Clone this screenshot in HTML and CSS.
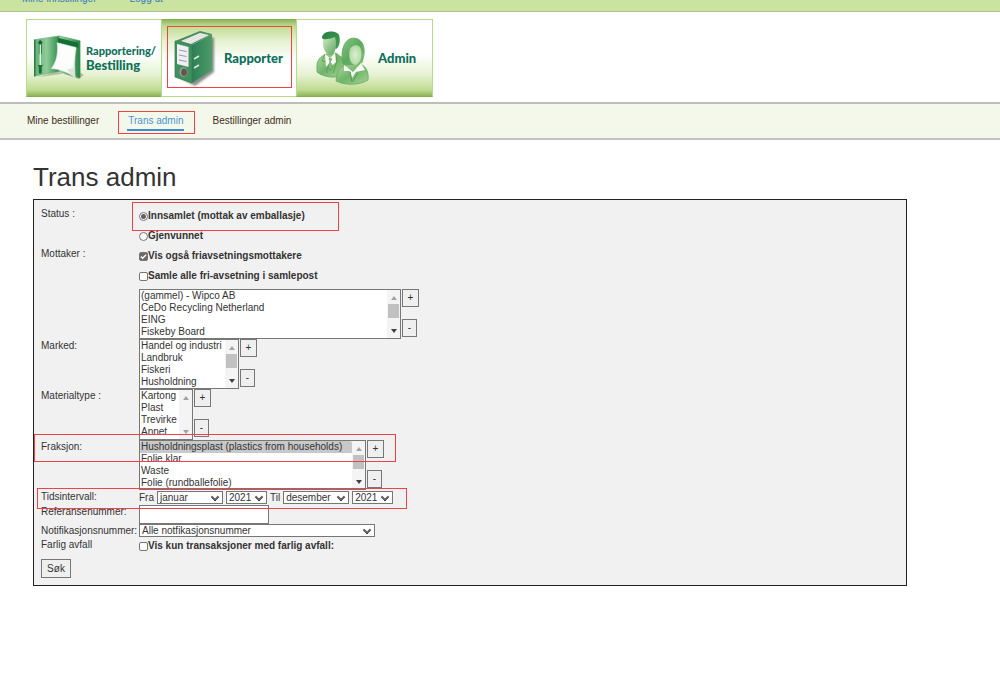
FILE: index.html
```html
<!DOCTYPE html>
<html lang="no">
<head>
<meta charset="utf-8">
<title>Trans admin</title>
<link rel="stylesheet" href="styles.css">
</head>
<body>
<div class="topbar"><a href="#">Mine innstillinger</a><a href="#">Logg ut</a></div>

<header class="header">
  <nav class="tabs">
    <a class="tab" href="#">
      <svg class="tab-icon" width="50" height="48" viewBox="0 0 52 50">
        <defs>
          <linearGradient id="cover" x1="0" x2="1"><stop offset="0" stop-color="#5fae72"/><stop offset=".5" stop-color="#8fcb98"/><stop offset="1" stop-color="#2f8c4b"/></linearGradient>
          <linearGradient id="coverR" x1="0" x2="1"><stop offset="0" stop-color="#a5d8a6"/><stop offset="1" stop-color="#278247"/></linearGradient>
          <linearGradient id="sheet" x1="0" y1="0" x2="1" y2="1"><stop offset="0" stop-color="#fff"/><stop offset=".7" stop-color="#fbfdfa"/><stop offset="1" stop-color="#cfdccf"/></linearGradient>
        </defs>
        <path d="M4 45 L24 39 L46 47 L52 43 L47 39Z" fill="#718071" opacity=".45"/>
        <path d="M0 6 L26 2 V39 L0 44Z" fill="url(#cover)" stroke="#6aa874" stroke-width=".6"/>
        <path d="M0 6 H1.500 V44 L0 44Z" fill="#287a42"/>
        <path d="M26 2 L48 7 V46 L26 39Z" fill="url(#coverR)" stroke="#4f9d60" stroke-width=".6"/>
        <path d="M25 4 L46 9 V15 L25 9Z" fill="#127036"/>
        <path d="M24 9 L44 14 C42 25 42 34 43 46 C36 40 28 37 18 36 C24 28 25 19 24 9Z" fill="url(#sheet)" stroke="#d7e7d6" stroke-width=".5"/>
        <path d="M34 37 L43 46 L42 36Z" fill="#dce5da"/>
        <path d="M6.500 8 V20 M6.500 34 V40" stroke="#176b3a" stroke-width="3" stroke-linecap="round"/>
        <path d="M6.500 11 V33" stroke="#d9efdb" stroke-width="1.500"/>
        <path d="M4 9 H9 M4 33 H9" stroke="#0c5530" stroke-width="1"/>
      </svg>
      <span class="tab-text tab-text-small">Rapportering/<br><span class="tab-text-large">Bestilling</span></span>
    </a>
    <a class="tab tab-active" href="#">
      <svg class="tab-icon binder" width="44" height="58" viewBox="0 0 44 58">
        <defs>
          <linearGradient id="side" x1="0" x2="1"><stop offset="0" stop-color="#2d7f56"/><stop offset="1" stop-color="#4d9b68"/></linearGradient>
          <filter id="soft" x="-20%" y="-20%" width="140%" height="140%"><feGaussianBlur stdDeviation="1.300"/></filter>
        </defs>
        <path d="M5 48 L22 57 L41 43 V9 L38 8Z" fill="#576158" opacity=".7" filter="url(#soft)"/>
        <path d="M2 12 L27 2 L39 5 L19 16Z" fill="#4d8c5d"/>
        <path d="M8 12 L27 4 L36 6 L18 15Z" fill="#f1f1ee"/>
        <path d="M11 12 L29 5 M14 13 L32 5.500 M17 14 L35 6" stroke="#c9d0c8" stroke-width=".6"/>
        <path d="M19 16 L39 5 V41 L19 54Z" fill="url(#side)"/>
        <path d="M2 12 L19 16 V54 L2 48Z" fill="#3f925f" stroke="#34764e" stroke-width=".7"/>
        <path d="M4 15 L15.500 18 V38 L4 35Z" fill="#f1edf5"/>
        <path d="M6 21 L13.500 22.500 M6 26 L13.500 27.500 M6 31 L13.500 32.500" stroke="#9b97a2" stroke-width="1"/>
        <ellipse cx="10.500" cy="43" rx="4" ry="4.800" fill="#9aa292"/>
        <ellipse cx="11" cy="43.300" rx="2.900" ry="3.700" fill="#66554e"/>
        <path d="M21 30 L26 27 M21 39 L26 36" stroke="#d6eadb" stroke-width="1.500"/>
      </svg>
      <span class="tab-text">Rapporter</span>
      <span class="mark mark-tab"></span>
    </a>
    <a class="tab" href="#">
      <svg class="tab-icon people" width="54" height="54" viewBox="0 0 54 54">
        <defs>
          <linearGradient id="suit" x1="0" y1="0" x2="1" y2="1"><stop offset="0" stop-color="#b0dba0"/><stop offset=".5" stop-color="#70b46b"/><stop offset="1" stop-color="#a4d393"/></linearGradient>
          <linearGradient id="hair" x1="0" y1="0" x2="1" y2="1"><stop offset="0" stop-color="#237f43"/><stop offset="1" stop-color="#4a9f58"/></linearGradient>
          <linearGradient id="hair2" x1="0" y1="0" x2="1" y2="1"><stop offset="0" stop-color="#8cc583"/><stop offset=".5" stop-color="#5aaa5f"/><stop offset="1" stop-color="#86c07c"/></linearGradient>
          <linearGradient id="face" x1="0" y1="0" x2="1" y2="1"><stop offset="0" stop-color="#d3ebc3"/><stop offset="1" stop-color="#57a35d"/></linearGradient>
          <radialGradient id="face2"><stop offset="0" stop-color="#dcefd0"/><stop offset="1" stop-color="#b4daa6"/></radialGradient>
        </defs>
        <path d="M1 39 C0 29 4 26 10 23 L20 22 L29 29 V44 C18 48 7 46 1 41Z" fill="url(#suit)" stroke="#67aa62" stroke-width=".8"/>
        <path d="M9 23 L6 30 L11 31 L11 42 M20 23 L21 30 L17 42" fill="none" stroke="#549956" stroke-width=".8"/>
        <path d="M9 23 L14 27 L19 22 L20 31 L16 35 L13 33 L10 36Z" fill="#f7fbef"/>
        <path d="M13 27 L16 28 L14 31 L17 35 L14 40 L12 35 L14 31Z" fill="#82ba78" stroke="#579859" stroke-width=".6"/>
        <path d="M6 7 C6 -1 21 -1 23 4 C25 10 23 17 20 18 L8 9Z" fill="url(#hair)"/>
        <path d="M7 8 C11 9 16 7 19 6 C22 17 18 24 14 24 C9 23 6 16 7 8Z" fill="url(#face)"/>
        <path d="M27 33 C24 20 28 7 38 7 C48 8 50 19 47 28 C46 34 43 34 38 35Z" fill="url(#hair2)" stroke="#5aa65d" stroke-width=".7"/>
        <path d="M20 50 C21 38 25 36 30 34 L44 33 C50 35 53 41 52 49 C42 55 28 54 20 50Z" fill="url(#suit)" stroke="#67aa62" stroke-width=".8"/>
        <path d="M28 34 L37 41 L45 32 L49 39 L40 41 L36 47 L34 40 L28 40Z" fill="#f7fbef"/>
        <path d="M34 41 L36 51 L42 42" fill="none" stroke="#559b59" stroke-width="1"/>
        <path d="M34 18 C37 13 44 13 45 19 C47 27 43 34 39 34 C34 33 32 25 34 18Z" fill="url(#face2)"/>
      </svg>
      <span class="tab-text">Admin</span>
    </a>
  </nav>
</header>

<nav class="subnav">
  <a href="#">Mine bestillinger</a>
  <a class="current" href="#">Trans admin<span class="mark mark-link"></span></a>
  <a href="#">Bestillinger admin</a>
</nav>

<main class="main">
  <h1>Trans admin</h1>
  <form class="panel">
    <div class="row">
      <span class="label">Status :</span>
      <div class="choices">
        <label class="choice"><input type="radio" name="status" checked>Innsamlet (mottak av emballasje)</label>
        <label class="choice"><input type="radio" name="status">Gjenvunnet</label>
      </div>
      <span class="mark mark-status"></span>
    </div>
    <div class="row">
      <label class="label" for="mottaker">Mottaker :</label>
      <div class="choices">
        <label class="choice"><input type="checkbox" checked>Vis også friavsetningsmottakere</label>
        <label class="choice"><input type="checkbox">Samle alle fri-avsetning i samlepost</label>
        <div class="picker">
          <div class="list list-xl">
            <select id="mottaker" multiple size="4"><option>(gammel) - Wipco AB</option><option>CeDo Recycling Netherland</option><option>EING</option><option>Fiskeby Board</option></select>
            <span class="scroll"><i class="up"></i><i class="thumb"></i><i class="down"></i></span>
          </div>
          <div class="buttons"><button type="button">+</button><button type="button" class="minus">-</button></div>
        </div>
      </div>
    </div>
    <div class="row">
      <label class="label label-tight" for="marked">Marked:</label>
      <div class="picker">
        <div class="list list-m">
          <select id="marked" multiple size="4"><option>Handel og industri</option><option>Landbruk</option><option>Fiskeri</option><option>Husholdning</option></select>
          <span class="scroll"><i class="up"></i><i class="thumb"></i><i class="down"></i></span>
        </div>
        <div class="buttons"><button type="button">+</button><button type="button" class="minus">-</button></div>
      </div>
    </div>
    <div class="row">
      <label class="label label-tight" for="material">Materialtype :</label>
      <div class="picker">
        <div class="list list-s">
          <select id="material" multiple size="4"><option>Kartong</option><option>Plast</option><option>Trevirke</option><option>Annet</option></select>
          <span class="scroll scroll-off"><i class="up"></i><i class="down"></i></span>
        </div>
        <div class="buttons"><button type="button">+</button><button type="button" class="minus">-</button></div>
      </div>
    </div>
    <div class="row">
      <label class="label label-tight" for="fraksjon">Fraksjon:</label>
      <div class="picker">
        <div class="list list-l">
          <select id="fraksjon" multiple size="4"><option class="chosen">Husholdningsplast (plastics from households)</option><option>Folie klar</option><option>Waste</option><option>Folie (rundballefolie)</option></select>
          <span class="scroll"><i class="up"></i><i class="thumb"></i><i class="down"></i></span>
        </div>
        <div class="buttons"><button type="button">+</button><button type="button" class="minus">-</button></div>
      </div>
      <span class="mark mark-fraction"></span>
    </div>
    <div class="row">
      <span class="label label-tight">Tidsintervall:</span>
      <div class="dates">
        <label for="fra">Fra</label>
        <span class="drop drop-month"><select id="fra"><option>januar</option></select></span>
        <span class="drop drop-year"><select aria-label="Fra år"><option>2021</option></select></span>
        <label for="til">Til</label>
        <span class="drop drop-month"><select id="til"><option>desember</option></select></span>
        <span class="drop drop-year"><select aria-label="Til år"><option>2021</option></select></span>
      </div>
      <span class="mark mark-dates"></span>
    </div>
    <div class="row">
      <label class="label label-tight" for="ref">Referansenummer:</label>
      <input class="text" id="ref" type="text">
    </div>
    <div class="row">
      <label class="label label-tight" for="notif">Notifikasjonsnummer:</label>
      <span class="drop drop-wide"><select id="notif"><option>Alle notfikasjonsnummer</option></select></span>
    </div>
    <div class="row">
      <label class="label label-tight" for="farlig">Farlig avfall</label>
      <label class="choice choice-last"><input id="farlig" type="checkbox">Vis kun transaksjoner med farlig avfall:</label>
    </div>
    <button type="submit" class="submit">Søk</button>
  </form>
</main>
</body>
</html>
```
FILE: styles.css
```css
* { box-sizing: border-box; }
body {
  margin: 0;
  background: #fff;
  color: #333;
  font: 10px/14px "Liberation Sans", Arial, sans-serif;
}
a { color: inherit; text-decoration: none; }
input, select, button { font: inherit; color: inherit; margin: 0; }

.topbar {
  display: flex;
  align-items: flex-end;
  gap: 33px;
  height: 12px;
  padding: 0 22px 6px;
  overflow: hidden;
  background: #cae3a0;
  border-bottom: 1px solid #abc58a;
  color: #337ab7;
  line-height: 12px;
}

.header {
  padding: 7px 26px 5px;
  border-bottom: 2px solid #bdbdbd;
}
.tabs { display: flex; }
.tab {
  position: relative;
  display: flex;
  align-items: center;
  width: 135px;
  height: 78px;
  padding-left: 7px;
  border: 1px solid #b9da86;
  border-bottom-color: #86ac50;
  border-right: 0;
  background: linear-gradient(#fff 0, #fff 45%, #e6f2d2 72%, #bfdc91 92%, #8fb659 100%);
  color: #0c6f5a;
  font: 900 13px/14px "Trebuchet MS", Lato, "Open Sans", sans-serif;
}
.tab:last-child { width: 137px; border-right: 1px solid #b9da86; }
.tab-active {
  border-color: #86ac50 #b9da86 #b9da86;
  background: linear-gradient(#8fb659 0, #bfdc91 8%, #e6f2d2 28%, #fff 55%, #fff 100%);
}
.tab-icon { flex: none; }
.tab-text { margin-left: 2px; white-space: nowrap; }
.tab-text-small { font-size: 11px; }
.tab-text-large { font-size: 13px; }
.binder { margin-left: 4px; margin-right: 5px; }
.people { margin-left: 12px; margin-right: 6px; }

.subnav {
  display: flex;
  gap: 28px;
  padding: 10px 27px 7px;
  background: #f4f8ea;
  border-bottom: 2px solid #c2c4bf;
  color: #3d2e20;
}
.subnav a { padding-bottom: 3px; }
.subnav .current {
  position: relative;
  padding: 0 1px 1px;
  border-bottom: 2px solid #3c8fd2;
  color: #4896d0;
}

.mark {
  position: absolute;
  border: 1px solid #ee4148;
  pointer-events: none;
  z-index: 1;
}
.mark-tab { left: 5px; right: 4px; top: 6px; bottom: 8px; }
.mark-link { left: -9px; right: -11px; top: -3px; bottom: -5px; }
.mark-status { left: 91px; width: 207px; top: -4px; height: 29px; }
.mark-fraction { left: -7px; width: 362px; top: -6px; height: 28px; }
.mark-dates { left: -4px; width: 370px; top: -2px; height: 21px; }

.main { padding: 22px 33px; }
h1 {
  margin: 0 0 7px;
  font-size: 26px;
  font-weight: normal;
  line-height: 30px;
}
.panel {
  max-width: 874px;
  padding: 6px 7px 7px;
  background: #f1f1f1;
  border: 1px solid #222;
}
.row {
  position: relative;
  display: grid;
  grid-template-columns: 98px 1fr;
  align-items: start;
  justify-items: start;
}
.label { white-space: nowrap; padding-top: 1px; }
.label-tight { padding-top: 0; }
.choice {
  display: flex;
  align-items: center;
  height: 20px;
  font-weight: bold;
}
.choice input {
  appearance: none;
  width: 9px;
  height: 9px;
  background: #fff;
  border: 1px solid #767676;
  border-radius: 2px;
}
.choice input[type="radio"] { border-radius: 50%; }
.choice input[type="radio"]:checked { background: radial-gradient(circle, #606060 0 2px, #fff 3px); }
.choice input[type="checkbox"]:checked {
  background: #6b6b6b url("data:image/svg+xml,%3Csvg xmlns='http://www.w3.org/2000/svg' viewBox='0 0 8 8'%3E%3Cpath d='M1 4l2 2 4-4' fill='none' stroke='white' stroke-width='1.5'/%3E%3C/svg%3E");
}
.choice-last { height: 16px; }

.picker { display: flex; gap: 1px; }
.choices .picker { margin-top: 3px; }
.list {
  display: flex;
  height: 50px;
  background: #fff;
  border: 1px solid #777;
}
.list select {
  flex: 1;
  min-width: 0;
  height: 48px;
  padding: 0;
  border: 0;
  background: #fff;
  overflow: hidden;
  scrollbar-width: none;
}
.list option {
  height: 12px;
  min-height: 12px;
  padding: 0 1px;
  line-height: 12px;
}
.list .chosen { background: #c8c8c8; }
.list-xl { width: 262px; }
.list-l { width: 227px; }
.list-m { width: 100px; }
.list-s { width: 54px; height: 51px; }
.scroll {
  display: flex;
  flex-direction: column;
  align-items: center;
  width: 13px;
  padding: 6px 0 5px;
  background: #f4f4f4;
}
.up, .down { border: 3px solid transparent; }
.up { border-top: 0; border-bottom: 4px solid #a3a3a3; }
.down { margin-top: auto; border-bottom: 0; border-top: 4px solid #404040; }
.scroll-off .down { border-top-color: #a3a3a3; }
.thumb { width: 11px; height: 14px; margin-top: 4px; background: #c1c1c1; }

button {
  padding: 0;
  background: #efefef;
  border: 1px solid #777;
}
.buttons {
  display: flex;
  flex-direction: column;
  align-items: flex-start;
  justify-content: space-between;
  height: 48px;
}
.buttons button { width: 17px; height: 18px; line-height: 14px; }
.buttons .minus { width: 15px; }

.dates { display: flex; align-items: center; gap: 3px; height: 15px; }
.drop { position: relative; display: flex; }
.drop::after {
  content: "";
  position: absolute;
  right: 5px;
  top: 3px;
  width: 5px;
  height: 5px;
  border: solid #222;
  border-width: 0 1px 1px 0;
  box-shadow: inset -1px -1px #555;
  transform: rotate(45deg);
  pointer-events: none;
}
.drop select {
  appearance: none;
  width: 100%;
  height: 13px;
  padding: 0 2px;
  background: #fff;
  border: 1px solid #767676;
  line-height: 11px;
}
.drop-month { width: 66px; }
.drop-year { width: 41px; }
.drop-wide { width: 236px; }
.text {
  width: 130px;
  height: 19px;
  background: #fff;
  border: 1px solid #777;
}
.submit {
  display: block;
  width: 30px;
  height: 19px;
  margin-top: 5px;
}
```
